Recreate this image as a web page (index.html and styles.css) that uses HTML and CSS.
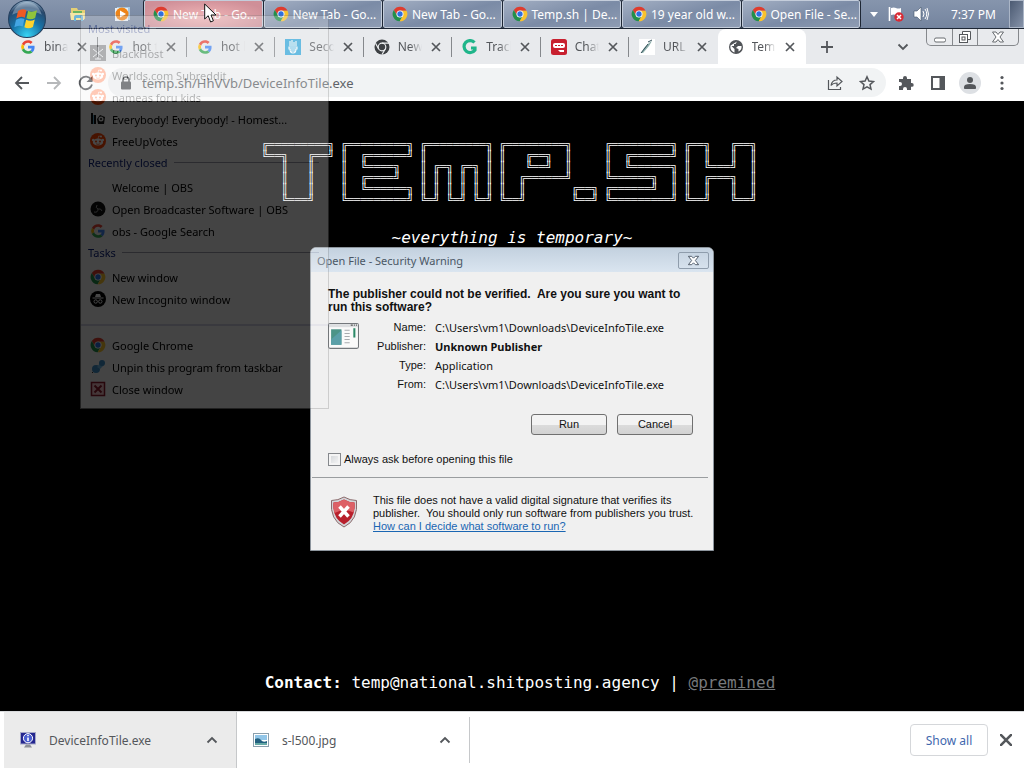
FILE: index.html
```html
<!DOCTYPE html>
<html lang="en">
<head>
  <meta charset="UTF-8">
  <title>Temp.sh | DeviceInfoTile.exe</title>
  <link rel="stylesheet" href="styles.css">
</head>
<body>
  <svg class="defs" aria-hidden="true">
    <symbol id="chrome" viewBox="0 0 48 48">
      <path fill="#df3c2e" d="M24 14H43.6A22 22 0 0 0 5.5 12L15.3 29A10 10 0 0 1 24 14Z"/>
      <path fill="#23904a" d="M15.3 29L5.5 12A22 22 0 0 0 22.9 46L32.7 29A10 10 0 0 1 15.3 29Z"/>
      <path fill="#f8c22d" d="M32.7 29L22.9 46A22 22 0 0 0 43.6 14H24A10 10 0 0 1 32.7 29Z"/>
      <circle cx="24" cy="24" r="10.5" fill="#fff"/>
      <circle cx="24" cy="24" r="8" fill="#2d6fe0"/>
    </symbol>
    <symbol id="google" viewBox="-4 -4 56 56">
      <path fill="#ea4335" d="M24 9.5c3.5 0 6.700 1.200 9.200 3.600l6.900-6.900C35.900 2.400 30.500 0 24 0 14.600 0 6.500 5.400 2.600 13.200l8 6.200C12.400 13.700 17.700 9.500 24 9.500z"/>
      <path fill="#4285f4" d="M47 24.500c0-1.600-.2-3.100-.4-4.500H24v9h12.900c-.6 3-2.300 5.500-4.800 7.200l7.700 6C44.400 38 47 32.100 47 24.500z"/>
      <path fill="#fbbc05" d="M10.500 28.600A14.500 14.500 0 0 1 10.500 19.400l-8-6.200a24 24 0 0 0 0 21.600z"/>
      <path fill="#34a853" d="M24 48c6.500 0 11.900-2.100 15.900-5.800l-7.700-6c-2.200 1.500-4.900 2.300-8.200 2.300-6.300 0-11.600-4.200-13.500-9.900l-8 6.200C6.500 42.600 14.600 48 24 48z"/>
    </symbol>
    <symbol id="close" viewBox="0 0 12 12">
      <path d="M2 2l8 8M10 2l-8 8" fill="none" stroke="#54575b" stroke-width="1.700"/>
    </symbol>
    <symbol id="reddit" viewBox="0 0 16 16">
      <circle cx="8" cy="8" r="8" fill="#ff4500"/>
      <ellipse cx="8" cy="9" rx="5.200" ry="3.600" fill="#fff"/>
      <circle cx="3.200" cy="7" r="1.300" fill="#fff"/><circle cx="12.800" cy="7" r="1.300" fill="#fff"/>
      <circle cx="11" cy="3.500" r="1" fill="#fff"/>
      <path d="M8 6l.7-3 2.300.5" stroke="#fff" stroke-width=".7" fill="none"/>
      <circle cx="6" cy="8.500" r="1" fill="#ff4500"/><circle cx="10" cy="8.500" r="1" fill="#ff4500"/>
      <path d="M6 10.800q2 1.200 4 0" stroke="#ff4500" stroke-width=".7" fill="none"/>
    </symbol>
    <symbol id="chevron-up" viewBox="0 0 12 12">
      <path d="M1.500 8.500L6 4l4.500 4.500" fill="none" stroke="#54575b" stroke-width="1.800"/>
    </symbol>
  </svg>

  <header class="taskbar">
    <button class="start" aria-label="Start">
      <svg viewBox="0 0 36 36">
        <defs>
          <radialGradient id="orb" cx=".5" cy=".95" r=".95">
            <stop offset="0" stop-color="#38d4f4"/><stop offset=".45" stop-color="#1673a8"/><stop offset=".8" stop-color="#28486c"/><stop offset="1" stop-color="#9cb6cc"/>
          </radialGradient>
        </defs>
        <circle cx="18" cy="18" r="17.500" fill="url(#orb)" stroke="#25405f"/>
        <path d="M4 14C7 4 14 2 18 2s11 2 14 12C24 9 12 10 4 14z" fill="#d8e6f0" opacity=".35"/>
        <path d="M9.500 10.500q4-3 8-.8l-1.600 7q-4-1.800-8 .8z" fill="#ee5a24"/>
        <path d="M19 10.300q4 2 8.500-.5l-1.800 7.200q-4.200 2.200-8.200.2z" fill="#8fc43c"/>
        <path d="M7.600 18.800q4-2.500 8-.7l-1.700 7q-3.800-1.900-7.900.7z" fill="#43a6e4"/>
        <path d="M17.200 18.600q4 2 8.200-.2l-1.800 7.200q-4.200 2.200-8.100.2z" fill="#fcd32d"/>
      </svg>
    </button>
    <nav class="pinned">
      <button aria-label="Windows Explorer">
        <svg viewBox="0 0 18 16"><path d="M2 2h6l1 2h7v9H2z" fill="#e4cf75"/><path d="M4 5h9v3H4z" fill="#6ab560"/><path d="M1 7h15l-1 7H2z" fill="#f4e6a5"/><path d="M5 15v-4q0-2 2-2h5q2 0 2 2v4h-2v-3H7v3z" fill="#6db6d9"/></svg>
      </button>
      <button aria-label="Media Player">
        <svg viewBox="0 0 18 16"><rect x="4" y="1" width="13" height="13" fill="#a6c8e2"/><rect x="2" y="2" width="13" height="13" fill="#e8eff5"/><circle cx="9" cy="8" r="6.500" fill="#ee8417"/><path d="M7 4.500l6 3.500-6 3.500z" fill="#fff"/></svg>
      </button>
    </nav>
    <nav class="tasks">
      <button class="task task-hot"><svg><use href="#chrome"/></svg>New Tab - Go...</button>
      <button class="task"><svg><use href="#chrome"/></svg>New Tab - Go...</button>
      <button class="task"><svg><use href="#chrome"/></svg>New Tab - Go...</button>
      <button class="task"><svg><use href="#chrome"/></svg>Temp.sh | De...</button>
      <button class="task"><svg><use href="#chrome"/></svg>19 year old w...</button>
      <button class="task"><svg><use href="#chrome"/></svg>Open File - Se...</button>
    </nav>
    <div class="tray">
      <svg class="tray-arrow" viewBox="0 0 8 5"><path d="M0 0h8L4 5z" fill="#fff"/></svg>
      <svg class="tray-icon" viewBox="0 0 16 16"><path d="M1.500 1v14" stroke="#fff" stroke-width="1.600"/><path d="M3 2q3-1 5 0t5 0v7q-3 1-5 0t-5 0z" fill="#fff"/><circle cx="11" cy="11" r="4.700" fill="#d92b35"/><path d="M9 9l4 4M13 9l-4 4" stroke="#fff" stroke-width="1.500"/></svg>
      <svg class="tray-icon" viewBox="0 0 16 16"><path d="M1 5h3l4-4v14l-4-4H1z" fill="#fff" stroke="#455468" stroke-width=".6"/><path d="M10 5q2 3 0 6M12 3q3.500 5 0 10M14 2q3 6 0 12" fill="none" stroke="#fff"/></svg>
      <time>7:37 PM</time>
    </div>
    <button class="show-desktop" aria-label="Show desktop"></button>
  </header>

  <div class="tabstrip">
    <div class="tabs">
      <div class="tab"><svg class="fav"><use href="#google"/></svg><span>binary</span><button aria-label="Close"><svg><use href="#close"/></svg></button></div>
      <div class="tab"><svg class="fav"><use href="#google"/></svg><span>hot to</span><button aria-label="Close"><svg><use href="#close"/></svg></button></div>
      <div class="tab"><svg class="fav"><use href="#google"/></svg><span>hot lin</span><button aria-label="Close"><svg><use href="#close"/></svg></button></div>
      <div class="tab"><svg class="fav" viewBox="0 0 16 16"><rect width="16" height="16" fill="#35a9dc"/><path d="M5 2v5M7 1v6M9 3v4M11 2v5M4 8h8v2H4zM5 10q0 4 3 4t3-4M6 12h5" fill="none" stroke="#fff" stroke-width="1.100"/></svg><span>Secon</span><button aria-label="Close"><svg><use href="#close"/></svg></button></div>
      <div class="tab"><svg class="fav" viewBox="0 0 16 16"><circle cx="8" cy="8" r="7.500" fill="#3d4043"/><circle cx="8" cy="8" r="3.800" fill="none" stroke="#eceef0" stroke-width="1.200"/><path d="M8 4.200h7M4.700 10L1.500 4.200M11.300 10L8 15.500" stroke="#eceef0" stroke-width="1.200"/></svg><span>New</span><button aria-label="Close"><svg><use href="#close"/></svg></button></div>
      <div class="tab"><svg class="fav" viewBox="0 0 16 16"><path d="M12.500 3.500A6 6 0 1 0 13 11V9H9" fill="none" stroke="#1fb58a" stroke-width="3.200"/></svg><span>Track</span><button aria-label="Close"><svg><use href="#close"/></svg></button></div>
      <div class="tab"><svg class="fav" viewBox="0 0 16 16"><rect width="16" height="16" rx="2.500" fill="#c8202f"/><rect x="2" y="4" width="12" height="5" rx="2" fill="#fff"/><path d="M4 6.500h8" stroke="#c8202f" stroke-dasharray="2 1"/><path d="M7 11h6v2H9z" fill="#fff"/></svg><span>Chat</span><button aria-label="Close"><svg><use href="#close"/></svg></button></div>
      <div class="tab"><svg class="fav" viewBox="0 0 16 16"><rect width="16" height="16" fill="#fff"/><path d="M2 14l3-5 6-6 2-1-3 5-6 7z" fill="#8fb0ac"/><path d="M2 14l4-5 3-4M9 3l4-2" stroke="#34505a" fill="none"/></svg><span>URL</span><button aria-label="Close"><svg><use href="#close"/></svg></button></div>
      <div class="tab tab-active"><svg class="fav" viewBox="0 0 16 16"><circle cx="8" cy="8" r="7" fill="#505357"/><path d="M9 2.500L7.500 5H6v2H3.500l3 3v3.500C3 12.500 2 9 2.500 6.500M10 7h3.500c.5 3-1.500 5-3 5.500v-2.500L8 9z" fill="#fff"/></svg><span>Temp</span><button aria-label="Close"><svg><use href="#close"/></svg></button></div>
    </div>
    <button class="new-tab" aria-label="New tab"><svg viewBox="0 0 14 14"><path d="M7 1v12M1 7h12" stroke="#54575b" stroke-width="1.800"/></svg></button>
    <button class="tab-search" aria-label="Search tabs"><svg viewBox="0 0 12 12"><path d="M1.500 3.500L6 8l4.500-4.500" fill="none" stroke="#54575b" stroke-width="1.800"/></svg></button>
    <div class="window-controls">
      <button aria-label="Minimize"><svg viewBox="0 0 14 14"><rect x="1.500" y="8" width="11" height="4" rx="1.500" fill="#fff" stroke="#686c70"/></svg></button>
      <button aria-label="Restore"><svg viewBox="0 0 14 14"><path d="M4.500 4V1.500h8v8H10" fill="#fff" stroke="#54575b"/><rect x="1.500" y="4.500" width="8" height="8" fill="#fff" stroke="#54575b"/><rect x="4" y="7" width="3" height="3" fill="none" stroke="#54575b"/></svg></button>
      <button aria-label="Close window"><svg viewBox="0 0 14 14"><path d="M1.500 2h3.500l2 2.500L9 2h3.500L9 7l3.500 5H9L7 9.500 5 12H1.500L5 7z" fill="#fff" stroke="#686c70"/></svg></button>
    </div>
  </div>

  <div class="toolbar">
    <button aria-label="Back"><svg viewBox="0 0 16 16"><path d="M15 8H2M8 2L2 8l6 6" fill="none" stroke="#54575b" stroke-width="1.800"/></svg></button>
    <button aria-label="Forward"><svg viewBox="0 0 16 16"><path d="M1 8h13M8 2l6 6-6 6" fill="none" stroke="#b6b8ba" stroke-width="1.800"/></svg></button>
    <button aria-label="Reload"><svg viewBox="0 0 16 16"><path d="M13.200 4.500A6.300 6.300 0 1 0 14 9.500" fill="none" stroke="#54575b" stroke-width="1.800"/><path d="M14.500 1v6h-6z" fill="#54575b"/></svg></button>
    <div class="omnibox">
      <svg class="lock" viewBox="0 0 12 14"><path d="M3 6V4a3 3 0 0 1 6 0v2" fill="none" stroke="#54575b" stroke-width="1.600"/><rect x="1" y="5.500" width="10" height="8" rx="1" fill="#54575b"/></svg>
      <input type="text" aria-label="Address" value="temp.sh/HhVVb/DeviceInfoTile.exe">
      <button aria-label="Share"><svg viewBox="0 0 16 16"><path d="M1.500 5v9.500h12V12M4 10.500Q5 5 10 5V2l5 4.500-5 4.500V8Q6 8 4 10.500z" fill="none" stroke="#54575b" stroke-width="1.200"/></svg></button>
      <button aria-label="Bookmark"><svg viewBox="0 0 16 16"><path d="M8 1.800l1.900 4.200 4.600.5L11 9.600l1 4.500-4-2.300-4 2.300 1-4.500L1.500 6.500l4.600-.5z" fill="none" stroke="#54575b" stroke-width="1.500"/></svg></button>
    </div>
    <button aria-label="Extensions"><svg viewBox="0 0 16 16"><path d="M1 4h4V3a2 2 0 0 1 4 0v1h4v4h.8a1.900 1.900 0 0 1 0 3.800H13V15H9v-1a2 2 0 0 0-4 0v1H1v-4h1a2 2 0 0 0 0-4H1z" fill="#54575b"/></svg></button>
    <button aria-label="Side panel"><svg viewBox="0 0 16 16"><rect x="2" y="2" width="12" height="12" fill="none" stroke="#54575b" stroke-width="2"/><path d="M9.500 2H14v12H9.500z" fill="#54575b"/></svg></button>
    <button class="profile" aria-label="Profile"><svg viewBox="0 0 16 16"><circle cx="8" cy="5" r="3" fill="#54575b"/><path d="M2 14v-2q0-3 6-3t6 3v2z" fill="#54575b"/></svg></button>
    <button aria-label="Menu"><svg viewBox="0 0 16 16"><circle cx="8" cy="2.500" r="1.600" fill="#54575b"/><circle cx="8" cy="8" r="1.600" fill="#54575b"/><circle cx="8" cy="13.500" r="1.600" fill="#54575b"/></svg></button>
  </div>

  <main class="page">
    <div class="hero">
<pre class="banner">
╔═════════╗ ╔═════════╗ ╔═════════╗ ╔═════════╗     ╔═════════╗ ╔══╗   ╔══╗
╚══╗   ╔══╝ ║  ╔══════╝ ║         ║ ║   ╔══╗  ║     ║  ╔══════╝ ║  ║   ║  ║
   ║   ║    ║  ╚════╗   ║ ╔═╗ ╔═╗ ║ ║   ╚══╝  ║     ║  ╚══════╗ ║  ╚═══╝  ║
   ║   ║    ║  ╔════╝   ║ ║ ║ ║ ║ ║ ║  ╔══════╝     ╚══════╗  ║ ║  ╔═══╗  ║
   ║   ║    ║  ╚══════╗ ║ ║ ║ ║ ║ ║ ║  ║       ╔══╗ ╔══════╝  ║ ║  ║   ║  ║
   ╚═══╝    ╚═════════╝ ╚═╝ ╚═╝ ╚═╝ ╚══╝       ╚══╝ ╚═════════╝ ╚══╝   ╚══╝
</pre>
      <p class="tagline">~everything is temporary~</p>
    </div>
    <p class="contact"><b>Contact:</b> temp@national.shitposting.agency | <a href="#">@premined</a></p>
  </main>

  <footer class="downloads">
    <div class="download download-hot">
      <svg class="fav" viewBox="0 0 16 16"><rect x=".5" y=".5" width="15" height="11.500" fill="#24268f" stroke="#a6a9c8"/><circle cx="8" cy="6.200" r="4.600" fill="#4b5fd0" stroke="#fff"/><path d="M8 3v1.300M8 5.400V9" stroke="#fff" stroke-width="1.600"/><path d="M6 12.500h4l2 3H4z" fill="#8d9098"/></svg>
      <span>DeviceInfoTile.exe</span>
      <button aria-label="Options"><svg><use href="#chevron-up"/></svg></button>
    </div>
    <div class="download">
      <svg class="fav" viewBox="0 0 16 16"><rect x=".5" y="1.500" width="15" height="13" fill="#fff" stroke="#8ba0ad"/><path d="M2 3h12v5H2z" fill="#92c6e8"/><path d="M2 7q4-2 6 1t6 1v4H2z" fill="#22607f"/><path d="M2 11h12v2H2z" fill="#65a9a5"/></svg>
      <span>s-l500.jpg</span>
      <button aria-label="Options"><svg><use href="#chevron-up"/></svg></button>
    </div>
    <button class="show-all">Show all</button>
    <button class="close-bar" aria-label="Close downloads"><svg viewBox="2 2 8 8"><use href="#close" width="12" height="12"/></svg></button>
  </footer>

  <section class="dialog" role="dialog" aria-labelledby="dialog-title">
    <div class="dialog-title">
      <h2 id="dialog-title">Open File - Security Warning</h2>
      <button aria-label="Close"><svg viewBox="0 0 14 14"><path d="M1.500 2.500H5l2 2 2-2h3.500L9 7l3.500 4.500H9l-2-2-2 2H1.500L5 7z" fill="#fff" stroke="#4a5563"/></svg></button>
    </div>
    <div class="dialog-body">
      <h3>The publisher could not be verified.&nbsp; Are you sure you want to run this software?</h3>
      <div class="file">
        <svg viewBox="0 0 30 26"><rect x=".5" y=".5" width="29" height="24" rx="1.500" fill="#fafafa" stroke="#74787c"/><path d="M1 2.500h28" stroke="#dcdee0" stroke-width="3"/><path d="M22 2h2M25 2h1M27 2h1" stroke="#555"/><path d="M3 6h10v15H3z" fill="#4c9488"/><path d="M3 16l10-9v14H3z" fill="#5a9fa8"/><path d="M16 7h5M16 10h5M16 13h5M16 16h5M16 19h5" stroke="#a8abae"/><path d="M25.500 5v9" stroke="#2c8a68" stroke-width="2"/></svg>
        <dl>
          <dt>Name:</dt><dd>C:\Users\vm1\Downloads\DeviceInfoTile.exe</dd>
          <dt>Publisher:</dt><dd><b>Unknown Publisher</b></dd>
          <dt>Type:</dt><dd>Application</dd>
          <dt>From:</dt><dd>C:\Users\vm1\Downloads\DeviceInfoTile.exe</dd>
        </dl>
      </div>
      <div class="dialog-buttons">
        <button>Run</button>
        <button>Cancel</button>
      </div>
      <label class="ask"><input type="checkbox">Always ask before opening this file</label>
    </div>
    <div class="dialog-foot">
      <svg viewBox="0 0 28 32"><path d="M14 1q6 3.500 12.500 3.500Q28.500 24 14 31-.5 24 1.500 4.500 8 4.500 14 1z" fill="#d3d5d8" stroke="#8a6a6c"/><path d="M14 3.500q5 3 10.500 3Q26 22 14 28.500 2 22 3.500 6.500 9 6.500 14 3.500z" fill="#b8202c"/><path d="M14 3.500q5 3 10.500 3 .3 6-1 10Q14 12 4.500 17q-1.300-4-1-10.500 5.500 0 10.500-3z" fill="#dd6066"/><path d="M9.500 10.500l9 10M18.500 10.500l-9 10" stroke="#fff" stroke-width="3.500"/></svg>
      <p>This file does not have a valid digital signature that verifies its<br>publisher.&nbsp; You should only run software from publishers you trust. <a href="#">How can I decide what software to run?</a></p>
    </div>
  </section>

  <!-- taskbar jump list, fading out -->
  <nav class="jumplist">
    <h4>Most visited</h4>
    <ul>
      <li><svg viewBox="0 0 16 16"><rect width="16" height="16" fill="#222"/><path d="M8 2v12M3 4l5 4 5-4M3 12l5-4 5 4M5 14h6" stroke="#fff" fill="none"/></svg>BlackHost</li>
      <li><svg><use href="#reddit"/></svg>Worlds.com Subreddit</li>
      <li><svg><use href="#reddit"/></svg>nameas foru kids</li>
      <li><svg viewBox="0 0 16 16"><path d="M1 2h2v11H1zM4 4h2v9H4zM7 8l3-4 5 2-1 7H8z" fill="#111"/><path d="M3 4h1v9H3z" fill="#6ab5d8"/><circle cx="11" cy="8" r="2.500" fill="#eee"/><circle cx="11" cy="8" r="1" fill="#111"/></svg>Everybody! Everybody! - Homest...</li>
      <li><svg><use href="#reddit"/></svg>FreeUpVotes</li>
    </ul>
    <h4>Recently closed</h4>
    <ul>
      <li><svg></svg>Welcome | OBS</li>
      <li><svg viewBox="0 0 16 16"><circle cx="8" cy="8" r="7.500" fill="#111"/><path d="M8 8q-3-1-1-4M8 8q3-1 4 2M8 8q0 4-4 3" stroke="#999" fill="none"/></svg>Open Broadcaster Software | OBS</li>
      <li><svg><use href="#google"/></svg>obs - Google Search</li>
    </ul>
    <h4>Tasks</h4>
    <ul>
      <li><svg><use href="#chrome"/></svg>New window</li>
      <li><svg viewBox="0 0 16 16"><circle cx="8" cy="8" r="8" fill="#000"/><path d="M5 6l1-3h4l1 3zM2.500 6.500h11v1h-11z" fill="#fff"/><circle cx="5.700" cy="10.500" r="1.700" fill="none" stroke="#fff"/><circle cx="10.300" cy="10.500" r="1.700" fill="none" stroke="#fff"/></svg>New Incognito window</li>
    </ul>
    <ul class="jumplist-foot">
      <li><svg><use href="#chrome"/></svg>Google Chrome</li>
      <li><svg viewBox="0 0 16 16"><path d="M2 14l5-5" stroke="#333"/><circle cx="6" cy="10" r="4" fill="#3d8cc4"/><path d="M7 8l4-5 3 3-4 4z" fill="#6db4e0"/><circle cx="12" cy="4" r="3" fill="#3d8cc4"/></svg>Unpin this program from taskbar</li>
      <li><svg viewBox="0 0 16 16"><rect x="1.500" y="1.500" width="13" height="13" fill="#f2c2c8" stroke="#8e1c2c" stroke-width="1.500"/><path d="M4.500 4.500l7 7M11.500 4.500l-7 7" stroke="#8e1c2c" stroke-width="2"/></svg>Close window</li>
    </ul>
  </nav>

  <svg class="cursor" viewBox="0 0 13 20"><path d="M.7 1v15l3.500-3.300L6.600 19l2.800-1.200L7 12h5z" fill="#fff" stroke="#111"/></svg>
</body>
</html>
```
FILE: styles.css
```css
* {
  box-sizing: border-box;
}

body {
  margin: 0;
  position: relative;
  min-height: 100vh;
  display: flex;
  flex-direction: column;
  overflow: hidden;
  font-family: "Noto Sans", "Open Sans", sans-serif;
  font-size: 12px;
  color: #54575b;
  background: #000;
}

button {
  display: flex;
  align-items: center;
  justify-content: center;
  margin: 0;
  padding: 0;
  border: none;
  background: none;
  font: inherit;
  color: inherit;
}

svg {
  display: block;
  flex: none;
  width: 16px;
  height: 16px;
}

.defs {
  position: absolute;
  width: 0;
  height: 0;
}

/* taskbar */
.taskbar {
  display: flex;
  height: 29px;
  padding-left: 8px;
  background: linear-gradient(#8695ad, #74849e);
  border-bottom: 1px solid #1d2634;
  color: #fff;
}

.start {
  align-self: flex-start;
  z-index: 2;
}

.start svg {
  width: 38px;
  height: 38px;
}

.pinned {
  display: flex;
  flex: none;
  width: 98px;
  justify-content: space-around;
  padding-left: 10px;
}

.pinned svg {
  width: 18px;
}

.tasks {
  display: flex;
  flex: 0 1 716px;
  gap: 1px;
}

.task {
  flex: 1;
  justify-content: flex-start;
  gap: 4px;
  padding-left: 8px;
  overflow: hidden;
  white-space: nowrap;
  border: 1px solid #c4cddb;
  border-radius: 2px;
  outline: 1px solid #1d2634;
  background: linear-gradient(165deg, #a3afc3 0%, #7b8ba6 55%, #8e9cb3 100%);
}

.task-hot {
  background: radial-gradient(ellipse at 50% 60%, #f0b4b6, #cf8f98 80%);
}

.tray {
  display: flex;
  flex: 1;
  align-items: center;
  justify-content: space-between;
  padding: 0 13px 0 10px;
  font-size: 12px;
  white-space: nowrap;
}

.tray-arrow {
  width: 8px;
  height: 5px;
}

.tray time {
  padding-left: 12px;
}

.show-desktop {
  width: 15px;
  border: 1px solid #aab5c6;
  background: linear-gradient(120deg, #4b5a72, #8693a9);
}

/* tabs */
.tabstrip {
  display: flex;
  height: 35px;
  padding: 0 5px 0 10px;
  background: #e8eaed;
}

.tabs {
  display: flex;
  flex: 0 1 796px;
  min-width: 0;
}

.tab {
  flex: 1;
  display: flex;
  align-items: center;
  gap: 8px;
  min-width: 0;
  padding: 0 10px;
  background: linear-gradient(#85888c, #85888c) no-repeat right / 1px 20px;
}

.tab:nth-last-child(2) {
  background: none;
}

.tab svg {
  width: 12px;
  height: 12px;
}

.tab svg.fav {
  width: 16px;
  height: 16px;
}

.tab span {
  flex: 1;
  overflow: hidden;
  white-space: nowrap;
  mask-image: linear-gradient(90deg, #000 50%, transparent);
}

.tab-active {
  background: #fff;
  border-radius: 8px 8px 0 0;
}

.new-tab {
  padding: 0 14px;
}

.new-tab svg {
  width: 14px;
}

.tab-search {
  margin-left: auto;
  padding-right: 17px;
}

.tab-search svg {
  width: 12px;
}

.window-controls {
  display: flex;
  flex: none;
  height: 17px;
  border: 1px solid #85888c;
  border-top: none;
  border-radius: 0 0 5px 5px;
}

.window-controls button {
  width: 25px;
}

.window-controls button:last-child {
  width: 41px;
}

.window-controls button + button {
  border-left: 1px solid #85888c;
}

.window-controls svg {
  width: 14px;
  height: 14px;
}

/* toolbar */
.toolbar {
  display: flex;
  align-items: center;
  height: 37px;
  padding: 0 6px;
  background: #fff;
}

.toolbar > button {
  width: 32px;
  height: 32px;
}

.omnibox {
  flex: 1;
  display: flex;
  align-items: center;
  height: 29px;
  margin: 0 4px 0 6px;
  padding: 0 3px 0 12px;
  border-radius: 15px;
  background: #f1f3f4;
}

.omnibox .lock {
  width: 12px;
  height: 14px;
}

.omnibox input {
  flex: 1;
  min-width: 0;
  padding: 0 10px;
  border: none;
  outline: none;
  background: none;
  font: inherit;
  font-size: 13px;
  color: #5f6368;
}

.omnibox button {
  width: 32px;
}

.profile svg {
  width: 22px;
  height: 22px;
  padding: 3px;
  border-radius: 50%;
  background: #dde0e4;
}

/* web page */
.page {
  flex: 1;
  display: flex;
  flex-direction: column;
  align-items: center;
  justify-content: space-between;
  padding: 39px 0 19px;
  font-family: "DejaVu Sans Mono", monospace;
  font-size: 16px;
  color: #fff;
}

.page p {
  margin: 0;
}

.hero {
  display: flex;
  flex-direction: column;
  align-items: center;
}

.banner {
  margin: 0 6px 22px 0;
  font-family: "Liberation Mono", monospace;
  font-size: 11px;
  line-height: 11px;
}

.tagline {
  font-style: italic;
}

.page .contact {
  padding-left: 16px;
}

.contact a {
  color: #77797c;
}

/* downloads */
.downloads {
  display: flex;
  align-items: center;
  height: 57px;
  padding: 0 12px 0 4px;
  border-top: 1px solid #d8dadc;
  background: #fff;
}

.download {
  display: flex;
  align-items: center;
  width: 233px;
  height: 46px;
  padding: 0 18px 0 16px;
  border-right: 1px solid #c6c8ca;
}

.download-hot {
  height: 56px;
  background: #ebebeb;
}

.download span {
  flex: 1;
  padding-left: 13px;
}

.download button svg,
.close-bar svg {
  width: 12px;
  height: 12px;
}

.show-all {
  width: 78px;
  height: 32px;
  margin: 0 12px 0 auto;
  border: 1px solid #d5d7da;
  border-radius: 4px;
  color: #3f68ae;
}

/* security dialog */
.dialog {
  position: absolute;
  left: 310px;
  top: 247px;
  width: 404px;
  border: 1px solid #8d959d;
  border-radius: 6px 6px 0 0;
  background: #f0f0f0;
  font-family: "Liberation Sans", Arial, sans-serif;
  font-size: 11px;
  line-height: 13px;
  color: #111;
}

.dialog-title {
  display: flex;
  align-items: center;
  justify-content: space-between;
  height: 24px;
  padding: 0 4px 0 6px;
  border-radius: 5px 5px 0 0;
  background: linear-gradient(#c3d1df, #dae5f0);
}

.dialog-title h2 {
  margin: 0;
  font: 11px "Noto Sans", sans-serif;
  color: #4a5765;
}

.dialog-title button {
  width: 31px;
  height: 17px;
  border: 1px solid #8f9dac;
  border-radius: 2px;
}

.dialog-title svg {
  width: 13px;
  height: 13px;
}

.dialog-body {
  padding: 16px 20px 11px 17px;
}

.dialog h3 {
  margin: 0 0 4px;
  font-size: 12px;
}

.file {
  display: flex;
}

.file svg {
  width: 31px;
  height: 27px;
  margin-top: 5px;
}

.file dl {
  display: grid;
  grid-template-columns: 67px 1fr;
  column-gap: 9px;
  margin: 0;
  line-height: 19px;
}

.file dt {
  text-align: right;
}

.file dd {
  margin: 0;
  font-family: "Noto Sans", sans-serif;
}

.dialog-buttons {
  display: flex;
  justify-content: flex-end;
  gap: 10px;
  padding: 20px 0 18px;
}

.dialog-buttons button {
  width: 76px;
  height: 21px;
  border: 1px solid #707070;
  border-radius: 3px;
  background: linear-gradient(#f3f3f3 50%, #dcdcdc 50%, #d2d2d2);
}

.ask {
  display: flex;
  align-items: center;
  gap: 3px;
}

.ask input {
  appearance: none;
  width: 13px;
  height: 13px;
  margin: 0;
  border: 1px solid #85888c;
  background: linear-gradient(135deg, #cfd2d5, #fafafa);
  box-shadow: inset 0 0 0 2px #f4f4f4;
}

.dialog-foot {
  display: flex;
  gap: 15px;
  margin: 0 5px 0 1px;
  padding: 16px 0 17px 18px;
  border-top: 1px solid #9a9d9f;
}

.dialog-foot svg {
  width: 28px;
  height: 32px;
  margin-top: 2px;
}

.dialog-foot p {
  margin: 0;
}

.dialog-foot a {
  display: block;
  color: #1a66b3;
}

/* jump list */
.jumplist {
  position: absolute;
  left: 80px;
  top: 15px;
  width: 249px;
  padding: 2px 0 8px;
  border: 1px solid #777;
  background: #f2f2f2;
  color: #000;
  font-size: 11px;
  opacity: .28;
}

.jumplist h4 {
  display: flex;
  align-items: center;
  gap: 6px;
  height: 20px;
  margin: 0;
  padding: 0 9px 0 7px;
  font-size: 11px;
  font-weight: normal;
  color: #0a1e78;
}

.jumplist h4::after {
  content: "";
  flex: 1;
  border-top: 1px solid #99a;
}

.jumplist ul {
  margin: 0;
  padding: 4px 0 0 9px;
  list-style: none;
}

.jumplist li {
  display: flex;
  align-items: center;
  gap: 6px;
  height: 22px;
  white-space: nowrap;
}

.jumplist .jumplist-foot {
  margin-top: 14px;
  padding-top: 8px;
  border-top: 2px solid #ccd;
}

.cursor {
  position: absolute;
  left: 204px;
  top: 3px;
  width: 13px;
  height: 20px;
}
```
